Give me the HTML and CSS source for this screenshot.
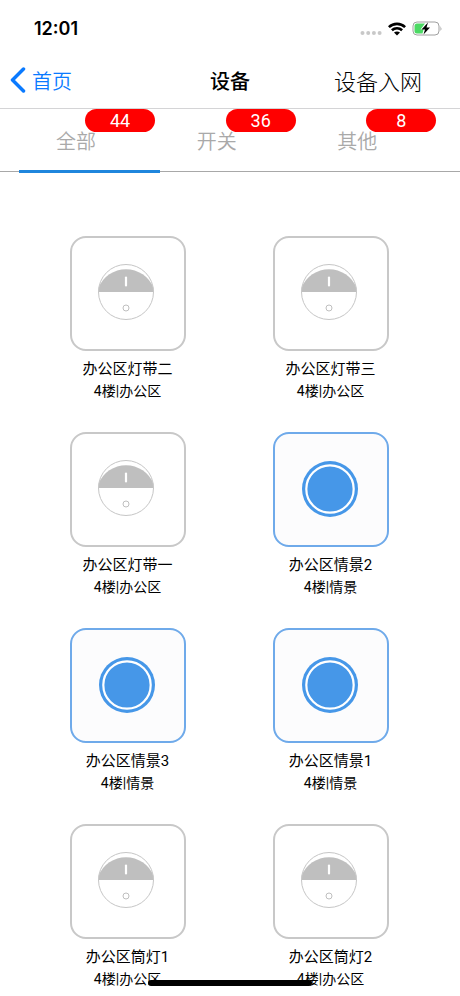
FILE: index.html
```html
<!DOCTYPE html>
<html lang="zh-CN">
<head>
    <meta charset="UTF-8">
    <meta name="viewport" content="width=device-width, initial-scale=1.0">
    <title>设备</title>
    <link rel="stylesheet" href="styles.css">
</head>
<body>
    <!-- Shared icons -->
    <svg class="sprite" aria-hidden="true">
        <symbol id="icon-switch" viewBox="0 0 58 58">
            <path d="M1.500 29 V25 A29.500 29.500 0 0 1 56.500 25 V29 Z" fill="#bfbfbf"/>
            <circle cx="29" cy="29" r="27.500" fill="none" stroke="#c6c6c6"/>
            <path d="M29 14.500 V22.500" stroke="#fff" stroke-width="2.200" stroke-linecap="round"/>
            <circle cx="29" cy="45" r="3" fill="none" stroke="#bfbfbf"/>
        </symbol>
        <symbol id="icon-scene" viewBox="0 0 58 58">
            <circle cx="29" cy="29" r="28" fill="#4697e8"/>
            <circle cx="29" cy="29" r="23.700" fill="none" stroke="#fff" stroke-width="2.200"/>
        </symbol>
    </svg>

    <div class="status-bar">
        <span class="time">12:01</span>
        <div class="status-icons">
            <svg width="22" height="6" viewBox="0 0 22 6" fill="#c8c8c8">
                <circle cx="2.500" cy="3" r="2"/>
                <circle cx="8.200" cy="3" r="2"/>
                <circle cx="13.900" cy="3" r="2"/>
                <circle cx="19.600" cy="3" r="2"/>
            </svg>
            <svg width="18" height="14" viewBox="0 0 18 14" fill="none" stroke="#000" stroke-width="2.600">
                <path d="M0.900 5.200 C5.400 0.700 12.600 0.700 17.100 5.200"/>
                <path d="M3.900 8.300 C6.800 5.500 11.200 5.500 14.100 8.300"/>
                <path d="M9 13.500 L6 10.500 C7.700 9 10.300 9 12 10.500 Z" fill="#000" stroke="none"/>
            </svg>
            <svg width="31" height="15" viewBox="0 0 31 15">
                <rect x="1" y="1" width="26" height="13" rx="4" fill="#fff" stroke="#a0a0a0"/>
                <path d="M5 2.500 H13 L8.500 8.500 H11.500 L10.500 12.500 H5 Q2.500 12.500 2.500 10 V5 Q2.500 2.500 5 2.500 Z" fill="#4cd964"/>
                <path d="M28.500 5 Q30.300 7.500 28.500 10 Z" fill="#a0a0a0"/>
                <path d="M16 1.500 L9.500 8.500 H13 L11.500 13.500 L18 6.500 H14.500 Z" fill="#000"/>
            </svg>
        </div>
    </div>

    <header class="nav-bar">
        <a class="back" href="#">
            <svg width="16" height="26" viewBox="0 0 16 26" fill="none" stroke="#0a7aff" stroke-width="3.500" stroke-linecap="round" stroke-linejoin="round">
                <path d="M13.500 2 L2.500 13 L13.500 24"/>
            </svg>
            首页
        </a>
        <h1>设备</h1>
        <a class="join" href="#">设备入网</a>
    </header>

    <nav class="tabs">
        <button class="tab active" type="button">全部<span class="badge">44</span></button>
        <button class="tab" type="button">开关<span class="badge">36</span></button>
        <button class="tab" type="button">其他<span class="badge">8</span></button>
    </nav>

    <main class="device-grid">
        <a class="device" href="#">
            <span class="tile"><svg><use href="#icon-switch"/></svg></span>
            <span class="name">办公区灯带二</span>
            <span class="room">4楼|办公区</span>
        </a>
        <a class="device" href="#">
            <span class="tile"><svg><use href="#icon-switch"/></svg></span>
            <span class="name">办公区灯带三</span>
            <span class="room">4楼|办公区</span>
        </a>
        <a class="device" href="#">
            <span class="tile"><svg><use href="#icon-switch"/></svg></span>
            <span class="name">办公区灯带一</span>
            <span class="room">4楼|办公区</span>
        </a>
        <a class="device" href="#">
            <span class="tile scene"><svg><use href="#icon-scene"/></svg></span>
            <span class="name">办公区情景2</span>
            <span class="room">4楼|情景</span>
        </a>
        <a class="device" href="#">
            <span class="tile scene"><svg><use href="#icon-scene"/></svg></span>
            <span class="name">办公区情景3</span>
            <span class="room">4楼|情景</span>
        </a>
        <a class="device" href="#">
            <span class="tile scene"><svg><use href="#icon-scene"/></svg></span>
            <span class="name">办公区情景1</span>
            <span class="room">4楼|情景</span>
        </a>
        <a class="device" href="#">
            <span class="tile"><svg><use href="#icon-switch"/></svg></span>
            <span class="name">办公区筒灯1</span>
            <span class="room">4楼|办公区</span>
        </a>
        <a class="device" href="#">
            <span class="tile"><svg><use href="#icon-switch"/></svg></span>
            <span class="name">办公区筒灯2</span>
            <span class="room">4楼|办公区</span>
        </a>
    </main>

    <div class="home-indicator"></div>
</body>
</html>
```
FILE: styles.css
```css
/* Base Styles */
* {
    box-sizing: border-box;
}

body {
    margin: 0;
    background: #fff;
    color: #000;
    font-family: Roboto, "Noto Sans CJK SC", sans-serif;
}

a {
    color: inherit;
    text-decoration: none;
}

svg {
    display: block;
}

.sprite {
    position: absolute;
    width: 0;
    height: 0;
}

/* Status Bar */
.status-bar {
    display: flex;
    justify-content: space-between;
    align-items: center;
    height: 54px;
    padding: 3px 17px 0 34px;
}

.time {
    font-family: Inter, sans-serif;
    font-size: 18px;
    font-weight: 600;
}

.status-icons {
    display: flex;
    align-items: center;
    gap: 6px;
}

.status-icons svg:first-child {
    margin-top: 8px;
}

/* Navigation Bar */
.nav-bar {
    display: grid;
    grid-template-columns: 1fr auto 1fr;
    align-items: center;
    height: 55px;
    padding: 0 38px 2px 10px;
    border-bottom: 1px solid #d4d4d6;
    font-weight: 350;
}

.back {
    display: flex;
    align-items: center;
    gap: 6px;
    font-size: 20px;
    color: #0a7aff;
}

.nav-bar h1 {
    margin: 0 0 0 28px;
    font-size: 20px;
    font-weight: 500;
}

.join {
    justify-self: end;
    font-size: 22px;
    font-weight: 300;
}

/* Tabs */
.tabs {
    display: flex;
    height: 63px;
    padding: 0 19px;
    border-bottom: 1px solid #a8a8a8;
}

.tab {
    position: relative;
    flex: 1;
    height: 64px;
    padding: 2px 0 0 37px;
    border: none;
    border-bottom: 3px solid transparent;
    background: none;
    font-family: inherit;
    font-size: 20px;
    font-weight: 350;
    text-align: left;
    color: #a9a9a9;
    cursor: pointer;
}

.tab.active {
    border-bottom-color: #1f86dd;
}

.badge {
    position: absolute;
    top: 0;
    left: 66px;
    width: 70px;
    border-radius: 12px;
    background: #f00;
    color: #fff;
    font-size: 18px;
    font-weight: 400;
    line-height: 23px;
    text-align: center;
}

/* Device Grid */
.device-grid {
    display: grid;
    grid-template-columns: 1fr 1fr;
    row-gap: 31px;
    padding: 64px 28px 0 26px;
}

.device {
    display: flex;
    flex-direction: column;
    align-items: center;
}

.tile {
    display: flex;
    justify-content: center;
    align-items: center;
    width: 116px;
    height: 115px;
    margin-bottom: 8px;
    padding: 0 4px 3px 0;
    border: 2px solid #c8c8c8;
    border-radius: 16px;
}

.tile.scene {
    padding: 0 2px 1px 0;
    border-color: #6faaea;
    background: #fcfcfd;
}

.tile svg {
    width: 58px;
    height: 58px;
}

.name {
    font-size: 15px;
    line-height: 20px;
}

.room {
    font-size: 14px;
    line-height: 20px;
    padding-top: 2px;
}

/* Home Indicator */
.home-indicator {
    position: fixed;
    bottom: 10px;
    left: 50%;
    width: 164px;
    height: 6px;
    border-radius: 3px;
    background: #000;
    transform: translateX(-50%);
}
```
